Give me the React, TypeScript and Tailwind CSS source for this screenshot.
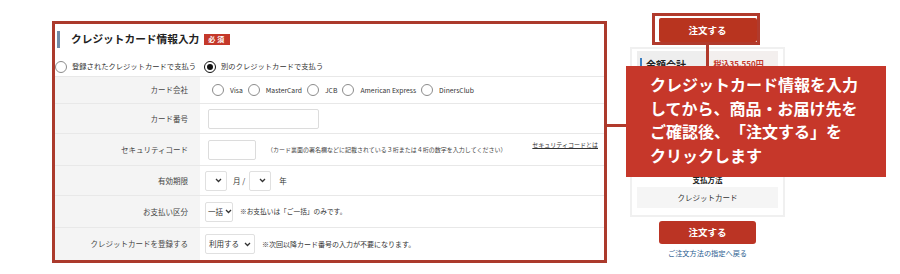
import React from "react";

const Radio = ({ checked = false }: { checked?: boolean }) =>
  checked ? (
    <span className="w-[12px] h-[12px] rounded-full border-[1.5px] border-[#111] bg-white flex items-center justify-center shrink-0">
      <span className="w-[6px] h-[6px] rounded-full bg-[#111]" />
    </span>
  ) : (
    <span className="block w-[12px] h-[12px] rounded-full border border-[#8c8c8c] bg-white shrink-0" />
  );

const Chevron = () => (
  <svg width="7" height="5" viewBox="0 0 7 5" className="shrink-0">
    <path d="M1 1 L3.5 3.5 L6 1" fill="none" stroke="#333" strokeWidth="1.3" />
  </svg>
);

const Row = ({
  label,
  h,
  children,
}: {
  label: string;
  h: string;
  children?: React.ReactNode;
}) => (
  <div className={`flex border-t border-[#e8e8e8] ${h}`}>
    <div className="w-[145px] bg-[#f4f4f4] flex items-center justify-end pr-[12px] text-[7.5px] text-[#444]">
      {label}
    </div>
    <div className="flex-1 flex items-center">{children}</div>
  </div>
);

export default function App() {
  return (
    <div className="relative w-[900px] h-[274px] bg-white overflow-hidden font-['Noto_Sans_CJK_JP',sans-serif] text-[#333]">
      <div className="flex items-start">
        {/* main form */}
        <div className="ml-[52px] mt-[21px] w-[555px] h-[242px] border-[3px] border-[#ab3a2c] flex flex-col">
          <div className="h-[30px] flex items-center">
            <span className="ml-[2px] w-[3px] h-[17px] bg-[#6f8ca8]" />
            <span className="ml-[11px] text-[10.7px] font-bold text-[#222] leading-none">
              クレジットカード情報入力
            </span>
            <span className="ml-[5px] h-[11px] px-[4px] bg-[#c4382a] text-white text-[7px] font-bold flex items-center leading-none tracking-[2px]">
              必須
            </span>
          </div>
          <div className="h-[22px] pt-[3px] flex items-center text-[7.3px]">
            <Radio />
            <span className="ml-[5px]">登録されたクレジットカードで支払う</span>
            <span className="ml-[8px]">
              <Radio checked />
            </span>
            <span className="ml-[5px]">別のクレジットカードで支払う</span>
          </div>
          <div className="flex flex-col">
            <Row label="カード会社" h="h-[27px]">
              <div className="ml-[12px] flex items-center text-[6.8px]">
                <Radio />
                <span className="ml-[6px]">Visa</span>
                <span className="ml-[5px]"><Radio /></span>
                <span className="ml-[6px]">MasterCard</span>
                <span className="ml-[5px]"><Radio /></span>
                <span className="ml-[6px]">JCB</span>
                <span className="ml-[5px]"><Radio /></span>
                <span className="ml-[6px]">American Express</span>
                <span className="ml-[5px]"><Radio /></span>
                <span className="ml-[6px]">DinersClub</span>
              </div>
            </Row>
            <Row label="カード番号" h="h-[30px]">
              <div className="ml-[8px] w-[111px] h-[20px] border border-[#dcdcdc] rounded-[2px] bg-white" />
            </Row>
            <Row label="セキュリティコード" h="h-[32px]">
              <div className="ml-[8px] w-[48px] h-[20px] border border-[#dcdcdc] rounded-[2px] bg-white" />
              <span className="ml-[11px] text-[6px] text-[#444]">
                （カード裏面の署名欄などに記載されている３桁または４桁の数字を入力してください）
              </span>
              <span className="ml-auto mr-[6px] mb-[10px] text-[6px] text-[#333] underline">
                セキュリティコードとは
              </span>
            </Row>
            <Row label="有効期限" h="h-[30px]">
              <div className="ml-[5px] w-[22px] h-[20px] border border-[#e0e0e0] rounded-[2px] flex items-center justify-end pr-[4px]">
                <Chevron />
              </div>
              <span className="ml-[6px] text-[7.5px]">月 /</span>
              <div className="ml-[4px] w-[22px] h-[20px] border border-[#e0e0e0] rounded-[2px] flex items-center justify-end pr-[4px]">
                <Chevron />
              </div>
              <span className="ml-[8px] text-[7.5px]">年</span>
            </Row>
            <Row label="お支払い区分" h="h-[32px]">
              <div className="ml-[5px] w-[28px] h-[20px] border border-[#e0e0e0] rounded-[2px] flex items-center pl-[2px] gap-[2px] text-[7.5px]">
                <span>一括</span>
                <Chevron />
              </div>
              <span className="ml-[7px] text-[6.7px]">※お支払いは「ご一括」のみです。</span>
            </Row>
            <Row label="クレジットカードを登録する" h="h-[33px]">
              <div className="ml-[5px] w-[50px] h-[20px] border border-[#e0e0e0] rounded-[2px] flex items-center justify-between px-[3px] text-[7.5px]">
                <span>利用する</span>
                <Chevron />
              </div>
              <span className="ml-[7px] text-[7px]">※次回以降カード番号の入力が不要になります。</span>
            </Row>
          </div>
        </div>

        {/* right column */}
        <div className="ml-[23px] w-[155px] flex flex-col items-center">
          <div className="mt-[18px] w-[98px] h-[24px] bg-[#b8341f] rounded-[2px] text-white text-[9.5px] font-bold flex items-center justify-center">
            注文する
          </div>
          <div className="mt-[5px] w-[155px] h-[170px] border-2 border-[#f0f0f0] flex flex-col px-[5px]">
            <div className="mt-[2px] h-[26px] grid grid-cols-2">
              <div className="bg-[#eeeeee] flex items-center pl-[3px]">
                <span className="w-[2px] h-[12px] bg-[#3d7fc0]" />
                <span className="ml-[4px] text-[10px] font-bold text-[#222]">金額合計</span>
              </div>
              <div className="bg-[#f3efee] flex items-center pl-[6px] text-[8px] text-[#c4382a] font-bold">
                税込35,550円
              </div>
            </div>
            <div className="flex-1" />
            <div className="h-[14px] flex items-center justify-center text-[7.5px] font-bold text-[#222]">
              支払方法
            </div>
            <div className="h-[21px] bg-[#f5f5f5] flex items-center justify-center text-[7.5px] text-[#333]">
              クレジットカード
            </div>
            <div className="h-[7px]" />
          </div>
          <div className="mt-[4px] w-[97px] h-[23px] bg-[#bb3424] rounded-[3px] text-white text-[9.5px] font-bold flex items-center justify-center">
            注文する
          </div>
          <div className="mt-[4px] text-[7.2px] text-[#2a5d8f]">ご注文方法の指定へ戻る</div>
        </div>
      </div>

      {/* annotation overlays */}
      <div className="absolute left-[652px] top-[13px] w-[108px] h-[32px] border-[3px] border-[#b13a2c]" />
      <div className="absolute left-[706px] top-[45px] w-[3px] h-[21px] bg-[#b13a2c]" />
      <div className="absolute left-[607px] top-[124px] w-[19px] h-[3px] bg-[#b13a2c]" />
      <div className="absolute left-[626px] top-[66px] w-[260px] h-[111px] bg-[#c6372a] text-white font-bold text-[16px] leading-[23.5px] pl-[24px] pt-[7px] [text-spacing-trim:space-all]">
        <div>クレジットカード情報を入力</div>
        <div>してから、商品・お届け先を</div>
        <div>ご確認後、「注文する」を</div>
        <div>クリックします</div>
      </div>
    </div>
  );
}
